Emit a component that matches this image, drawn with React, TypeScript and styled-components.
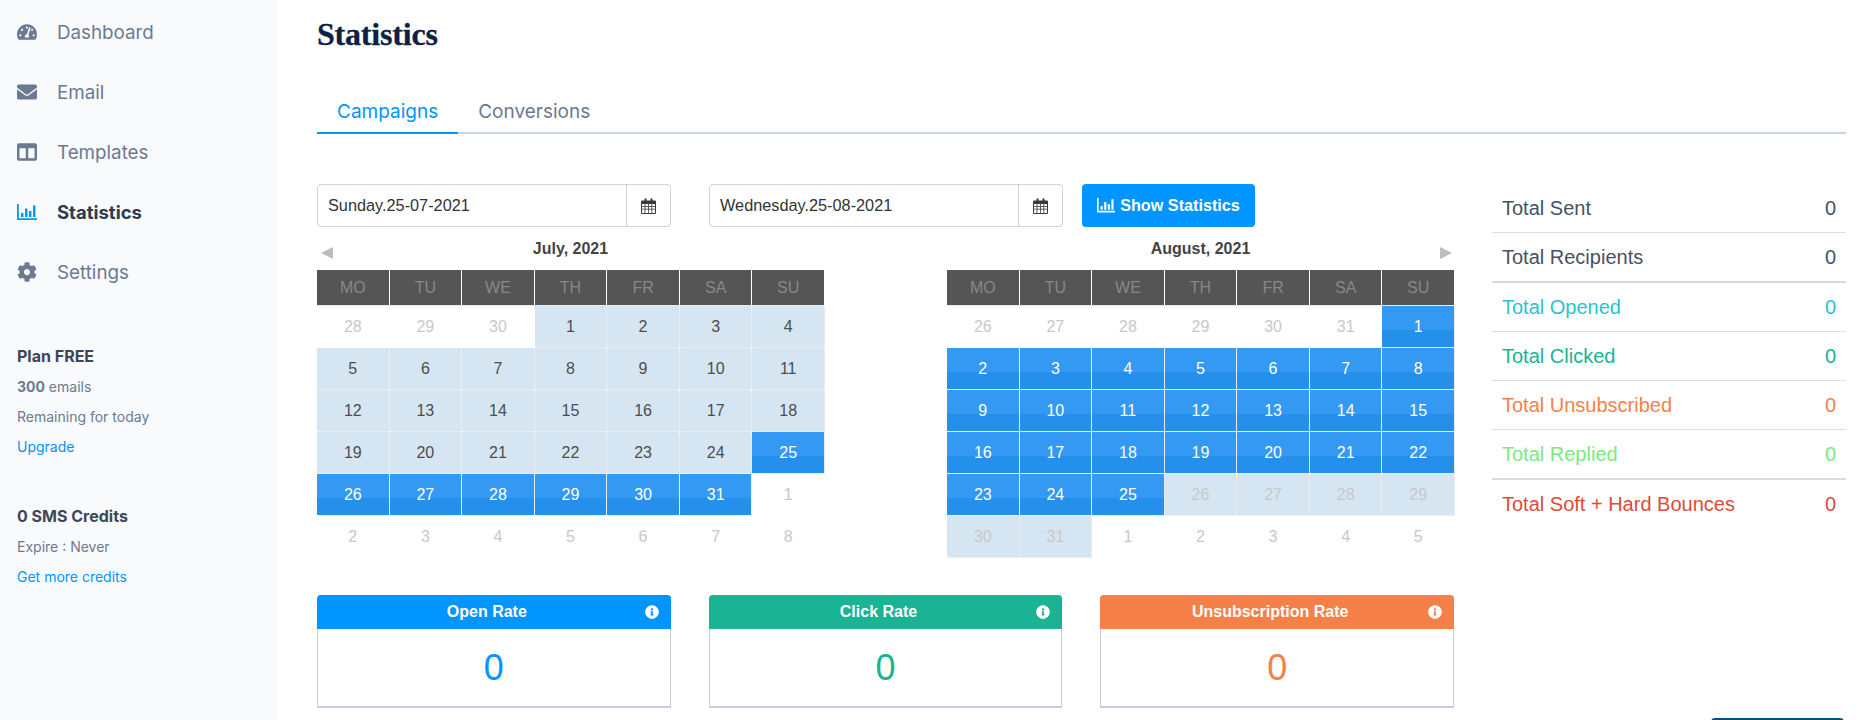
import React from 'react';
import styled, { createGlobalStyle } from 'styled-components';
import { FaTachometerAlt, FaEnvelope, FaColumns, FaCog, FaInfoCircle } from 'react-icons/fa';

const GlobalStyle = createGlobalStyle`
  html, body { margin: 0; padding: 0; background: #fff; overflow: hidden; }
  body { font-family: Inter, "Liberation Sans", sans-serif; }
`;

const Page = styled.div`
  display: flex;
  width: 1866px;
  height: 720px;
  overflow: hidden;
  position: relative;
`;

const Sidebar = styled.aside`
  width: 277px;
  flex: none;
  background: #f9fafc;
  padding: 2px 0 0 17px;
  box-sizing: border-box;
`;

const NavList = styled.nav`
  display: flex;
  flex-direction: column;
`;

const NavItem = styled.a<{ $active?: boolean }>`
  display: flex;
  align-items: center;
  height: 60px;
  font-size: ${p => (p.$active ? 18.5 : 18.8)}px;
  color: ${p => (p.$active ? '#2d3b4e' : '#6b7a90')};
  font-weight: ${p => (p.$active ? 700 : 400)};
  svg {
    width: 20px;
    height: 20px;
    margin-right: 20px;
    color: ${p => (p.$active ? '#0095ff' : '#6b7a90')};
  }
`;

const Side = styled.div`
  margin-top: 40px;
  display: flex;
  flex-direction: column;
`;

const SideTitle = styled.div`
  font-size: 16px;
  font-weight: 700;
  color: #3c4858;
  height: 30px;
  line-height: 28px;
`;

const SideLine = styled.div`
  font-size: 14px;
  color: #6b7a90;
  height: 30px;
  line-height: 30px;
  b { font-weight: 700; }
`;

const SideLink = styled(SideLine)`
  color: #0095ff;
`;

const Main = styled.main`
  flex: 1;
  padding: 0 20px 0 40px;
  min-width: 0;
`;

const Title = styled.h1`
  margin: 0;
  padding-top: 16px;
  height: 37px;
  font: 700 32px/37px "Liberation Serif", serif;
  letter-spacing: -0.2px;
  -webkit-text-stroke: 0.3px #0b2145;
  color: #0b2145;
`;

const Tabs = styled.div`
  display: flex;
  margin-top: 35px;
  border-bottom: 2px solid #c8d5e4;
`;

const Tab = styled.div<{ $active?: boolean }>`
  padding: 4px 20px 0;
  height: 40px;
  line-height: 40px;
  font-size: 19px;
  margin-bottom: -2px;
  color: ${p => (p.$active ? '#0095ff' : '#6b7a90')};
  border-bottom: 2px solid ${p => (p.$active ? '#0095ff' : 'transparent')};
`;

const Columns = styled.div`
  display: flex;
  margin-top: 50px;
`;

const Left = styled.div`
  width: 1137px;
  flex: none;
`;

const FilterRow = styled.div`
  display: flex;
  align-items: center;
`;

const DateField = styled.div`
  display: flex;
  width: 354px;
  height: 43px;
  box-sizing: border-box;
  border: 1px solid #ced4da;
  border-radius: 4px;
  margin-right: 38px;
  font: 16.3px "Liberation Sans", sans-serif;
  color: #333;
`;

const DateValue = styled.div`
  flex: 1;
  padding-left: 10px;
  line-height: 40px;
`;

const DateIcon = styled.div`
  width: 43px;
  border-left: 1px solid #ced4da;
  display: flex;
  align-items: center;
  justify-content: center;
  color: #3a3a3a;
`;

const ShowButton = styled.button`
  width: 173px;
  height: 43px;
  margin-left: -19px;
  border: 0;
  border-radius: 4px;
  background: #0095ff;
  color: #fff;
  font: 700 16.2px "Liberation Sans", sans-serif;
  display: flex;
  align-items: center;
  justify-content: center;
  gap: 5px;
  padding: 0;
`;

const Calendars = styled.div`
  display: flex;
  justify-content: space-between;
  width: 1137px;
  margin-top: 10px;
`;

const Calendar = styled.div`
  width: 507px;
  font-family: "Liberation Sans", sans-serif;
`;

const CalHead = styled.div`
  position: relative;
  height: 33px;
  line-height: 24px;
  text-align: center;
  font-size: 16px;
  font-weight: 700;
  color: #444;
`;

const Arrow = styled.span<{ $side: 'left' | 'right' }>`
  position: absolute;
  top: 10px;
  ${p => p.$side}: ${p => (p.$side === 'left' ? 4 : 2)}px;
  width: 0;
  height: 0;
  border-top: 6px solid transparent;
  border-bottom: 6px solid transparent;
  ${p => (p.$side === 'left' ? 'border-right' : 'border-left')}: 12px solid #bdbdbd;
`;

const CalGrid = styled.div`
  display: grid;
  grid-template-columns: repeat(7, 1fr);
  column-gap: 1px;
`;

const WeekDay = styled.div`
  height: 35px;
  line-height: 35px;
  margin-bottom: 1px;
  text-align: center;
  background: #555;
  color: #888;
  font-size: 16px;
  box-shadow: 0 1px 0 #ececec;
`;

type Kind = 'out' | 'range' | 'selected' | 'rangeOut';

const Day = styled.div<{ $kind: Kind }>`
  height: 41px;
  line-height: 41px;
  margin-bottom: 1px;
  text-align: center;
  font-size: 16px;
  color: ${p => (p.$kind === 'selected' ? '#fff' : p.$kind === 'range' ? '#4d4d4d' : '#c8c8c8')};
  background: ${p =>
    p.$kind === 'selected'
      ? 'linear-gradient(#3399f3 0 59%, #258fec 59% 100%)'
      : p.$kind === 'out'
        ? '#fff'
        : '#d6e5f2'};
  box-shadow: ${p => (p.$kind === 'out' ? 'none' : '1px 1px 0 #ececec')};
`;

const Cards = styled.div`
  display: flex;
  gap: 38px;
  margin-top: 37px;
`;

const Card = styled.div<{ $color: string }>`
  width: 354px;
  height: 113px;
  box-sizing: border-box;
  border: 1px solid #c3cede;
  border-top: 0;
  border-bottom-width: 2px;
  border-radius: 4px 4px 0 0;
  display: flex;
  flex-direction: column;
  color: ${p => p.$color};
`;

const CardHead = styled.div<{ $color: string }>`
  position: relative;
  margin: 0 -1px;
  height: 34px;
  padding-right: 14px;
  border-radius: 4px 4px 0 0;
  background: ${p => p.$color};
  color: #fff;
  text-align: center;
  font: 700 16px/34px "Liberation Sans", sans-serif;
  svg {
    position: absolute;
    right: 12px;
    top: 10px;
    width: 14px;
    height: 14px;
  }
`;

const CardValue = styled.div`
  flex: 1;
  display: flex;
  align-items: center;
  justify-content: center;
  font: 36px "Liberation Sans", sans-serif;
`;

const Totals = styled.div`
  width: 354px;
  margin-left: 38px;
  font-family: "Liberation Sans", sans-serif;
`;

const TotalRow = styled.div<{ $color: string; $thick?: boolean; $last?: boolean }>`
  display: flex;
  justify-content: space-between;
  padding: 0 10px;
  height: 48px;
  line-height: 48px;
  font-size: 20px;
  color: ${p => p.$color};
  border-bottom: ${p => (p.$last ? '0' : p.$thick ? '2px solid #dadada' : '1px solid #dfdfdf')};
`;

const ChatTab = styled.div`
  position: absolute;
  right: 22px;
  top: 718px;
  width: 133px;
  height: 8px;
  border-radius: 4px 4px 0 0;
  background: #05507f;
`;

// font-awesome 4 style glyphs, the fa packages only carry the newer shapes
const CalendarGlyph = () => (
  <svg width="15" height="16" viewBox="0 0 15 16" fill="currentColor">
    <path d="M1 2.5h2.5V1.2a1 1 0 0 1 2 0v1.3h4V1.2a1 1 0 0 1 2 0v1.3H14a1 1 0 0 1 1 1V15a1 1 0 0 1-1 1H1a1 1 0 0 1-1-1V3.5a1 1 0 0 1 1-1z" />
    <path
      fill="#fff"
      d="M1 6h2.6v2H1zM4.4 6h2.6v2H4.4zM7.8 6h2.6v2H7.8zM11.2 6H14v2h-2.8zM1 8.8h2.6v2H1zM4.4 8.8h2.6v2H4.4zM7.8 8.8h2.6v2H7.8zM11.2 8.8H14v2h-2.8zM1 11.6h2.6V15H1zM4.4 11.6h2.6V15H4.4zM7.8 11.6h2.6V15H7.8zM11.2 11.6H14V15h-2.8z"
    />
  </svg>
);

const BarsGlyph: React.FC<{ size?: number }> = ({ size = 20 }) => (
  <svg width={size} height={size * 0.8} viewBox="0 0 20 16" fill="currentColor">
    <path d="M0 0h1.8v14.2H20V16H0z" />
    <path d="M4 9h2.4v4H4zM8 4.5h2.4V13H8zM12 7h2.4v6H12zM16 1.5h2.4V13H16z" />
  </svg>
);

const navItems = [
  { label: 'Dashboard', icon: <FaTachometerAlt /> },
  { label: 'Email', icon: <FaEnvelope /> },
  { label: 'Templates', icon: <FaColumns /> },
  { label: 'Statistics', icon: <BarsGlyph />, active: true },
  { label: 'Settings', icon: <FaCog /> },
];

const weekDays = ['MO', 'TU', 'WE', 'TH', 'FR', 'SA', 'SU'];

type Cell = [number, Kind];

const seq = (from: number, to: number, kind: Kind): Cell[] => {
  const out: Cell[] = [];
  for (let d = from; d <= to; d++) out.push([d, kind]);
  return out;
};

const july: Cell[] = [
  ...seq(28, 30, 'out'),
  ...seq(1, 24, 'range'),
  ...seq(25, 31, 'selected'),
  ...seq(1, 8, 'out'),
];

const august: Cell[] = [
  ...seq(26, 31, 'out'),
  ...seq(1, 25, 'selected'),
  ...seq(26, 31, 'rangeOut'),
  ...seq(1, 5, 'out'),
];

const cards = [
  { title: 'Open Rate', color: '#0095ff' },
  { title: 'Click Rate', color: '#1ab394' },
  { title: 'Unsubscription Rate', color: '#f58148' },
];

const totals = [
  { label: 'Total Sent', color: '#465264' },
  { label: 'Total Recipients', color: '#465264', thick: true },
  { label: 'Total Opened', color: '#26c6ce' },
  { label: 'Total Clicked', color: '#1ab394' },
  { label: 'Total Unsubscribed', color: '#f58148' },
  { label: 'Total Replied', color: '#7ae97f', thick: true },
  { label: 'Total Soft + Hard Bounces', color: '#dd4b39', last: true },
];

const MonthCalendar: React.FC<{ title: string; days: Cell[]; arrow: 'left' | 'right' }> = ({ title, days, arrow }) => (
  <Calendar>
    <CalHead>
      <Arrow $side={arrow} />
      {title}
    </CalHead>
    <CalGrid>
      {weekDays.map(d => (
        <WeekDay key={d}>{d}</WeekDay>
      ))}
      {days.map(([d, kind], i) => (
        <Day key={i} $kind={kind}>
          {d}
        </Day>
      ))}
    </CalGrid>
  </Calendar>
);

const App: React.FC = () => (
  <Page>
    <GlobalStyle />
    <Sidebar>
      <NavList>
        {navItems.map(item => (
          <NavItem key={item.label} $active={item.active}>
            {item.icon}
            {item.label}
          </NavItem>
        ))}
      </NavList>
      <Side>
        <SideTitle>Plan FREE</SideTitle>
        <SideLine>
          <b>300</b> emails
        </SideLine>
        <SideLine>Remaining for today</SideLine>
        <SideLink>Upgrade</SideLink>
      </Side>
      <Side>
        <SideTitle>0 SMS Credits</SideTitle>
        <SideLine>Expire : Never</SideLine>
        <SideLink>Get more credits</SideLink>
      </Side>
    </Sidebar>
    <Main>
      <Title>Statistics</Title>
      <Tabs>
        <Tab $active>Campaigns</Tab>
        <Tab>Conversions</Tab>
      </Tabs>
      <Columns>
        <Left>
          <FilterRow>
            <DateField>
              <DateValue>Sunday.25-07-2021</DateValue>
              <DateIcon>
                <CalendarGlyph />
              </DateIcon>
            </DateField>
            <DateField>
              <DateValue>Wednesday.25-08-2021</DateValue>
              <DateIcon>
                <CalendarGlyph />
              </DateIcon>
            </DateField>
            <ShowButton>
              <BarsGlyph size={18} />
              Show Statistics
            </ShowButton>
          </FilterRow>
          <Calendars>
            <MonthCalendar title="July, 2021" days={july} arrow="left" />
            <MonthCalendar title="August, 2021" days={august} arrow="right" />
          </Calendars>
          <Cards>
            {cards.map(c => (
              <Card key={c.title} $color={c.color}>
                <CardHead $color={c.color}>
                  {c.title}
                  <FaInfoCircle />
                </CardHead>
                <CardValue>0</CardValue>
              </Card>
            ))}
          </Cards>
        </Left>
        <Totals>
          {totals.map(t => (
            <TotalRow key={t.label} $color={t.color} $thick={t.thick} $last={t.last}>
              <span>{t.label}</span>
              <span>0</span>
            </TotalRow>
          ))}
        </Totals>
      </Columns>
    </Main>
    <ChatTab />
  </Page>
);

export default App;
